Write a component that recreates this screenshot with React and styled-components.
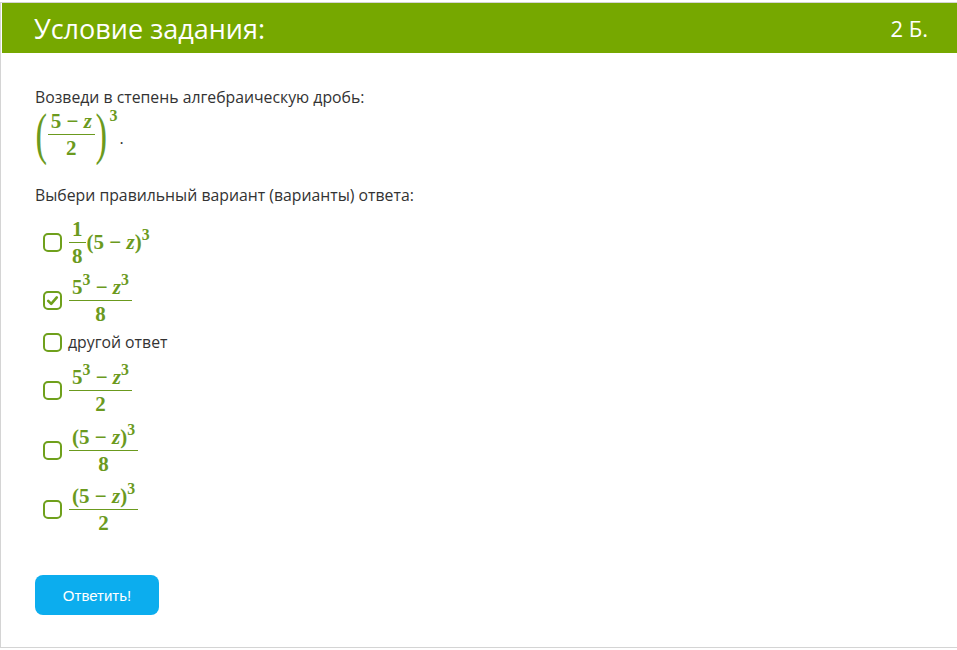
import React from "react";
import styled, { createGlobalStyle } from "styled-components";

const Global = createGlobalStyle`
  body {
    margin: 0;
    background: #fff;
    font-family: "Open Sans", "Liberation Sans", sans-serif;
  }
`

const Card = styled.div`
  margin-top: 2px;
  width: 957px;
  height: 646px;
  box-sizing: border-box;
  border: 1px solid #d4d4d4;
  border-right: none;
  padding-left: 1px;
`

const Header = styled.div`
  height: 50px;
  background: #76a800;
  color: #fff;
  display: flex;
  align-items: center;
  justify-content: space-between;
  padding: 0 29px 0 32px;
`

const Title = styled.h1`
  margin: 0;
  font-size: 27px;
  font-weight: 400;
`

const Points = styled.span`
  font-size: 22px;
`

const Body = styled.div`
  padding: 33px 33px 0 33px;
  color: #333;
  font-size: 15.8px;
`

const Line = styled.p`
  margin: ${p => p.mt || 0}px 0 0;
  line-height: 22px;
`

const Math = styled.span`
  font-family: "Liberation Serif", "DejaVu Serif", serif;
  font-weight: 700;
  color: #6b9a1e;
  font-size: 21px;
  display: inline-flex;
  align-items: center;
  white-space: nowrap;
`

const Frac = styled.span`
  display: inline-flex;
  flex-direction: column;
  align-items: center;
  margin: 0 1px;
`

const Num = styled.span`
  padding: 0 3px 2px;
  line-height: 22px;
  border-bottom: 1px solid #6b9a1e;
`

const Den = styled.span`
  padding-top: 2px;
  line-height: 22px;
`

const Var = styled.i`
  font-style: italic;
  font-weight: 700;
`

const Sup = styled.sup`
  font-size: 0.75em;
  vertical-align: ${p => p.up || 0.6}em;
  line-height: 0;
`

const Tail = styled.span`
  line-height: 22px;
`

const BigExpr = styled(Math)`
  display: flex;
  height: 52px;
  margin-left: 1px;
`

const BigParen = styled.span`
  font-weight: 400;
  font-size: 56px;
  line-height: 52px;
  transform: scaleX(0.62);
  margin: 0 -4px;
`

const OuterSup = styled.span`
  align-self: flex-start;
  font-size: 16px;
  line-height: 16px;
  margin: 0 0 0 3px;
`

const Dot = styled.span`
  align-self: center;
  color: #333;
  font-family: "Open Sans", sans-serif;
  font-weight: 400;
  font-size: 16px;
  margin: 8px 0 0 2px;
`

const Options = styled.div`
  margin-top: 7px;
  padding-left: 8px;
  display: flex;
  flex-direction: column;
`

const Option = styled.label`
  display: flex;
  align-items: center;
  gap: 6px;
  height: ${p => p.h}px;
`

const Box = styled.span`
  width: 19px;
  height: 19px;
  box-sizing: border-box;
  border: 2px solid #6fa01c;
  border-radius: 5px;
  display: flex;
  align-items: center;
  justify-content: center;
  flex-shrink: 0;
`

const Plain = styled.span`
  color: #333;
  font-size: 15.8px;
`

const Button = styled.button`
  margin-top: 32px;
  width: 124px;
  height: 40px;
  border: none;
  border-radius: 8px;
  background: #0cadee;
  color: #fff;
  font-family: "Liberation Sans", Arial, sans-serif;
  font-size: 15px;
`

function Check({ on }) {
  return (
    <Box>
      {on && (
        <svg width="13" height="13" viewBox="0 0 13 13">
          <path d="M2.2 6.8 L5.2 9.8 L10.8 3.4" fill="none" stroke="#6fa01c" strokeWidth="2.6" strokeLinecap="round" strokeLinejoin="round" />
        </svg>
      )}
    </Box>
  )
}

const minus = "\u2212"

const powDiff = <>5<Sup>3</Sup> {minus} <Var>z</Var><Sup>3</Sup></>
const powBin = <>(5 {minus} <Var>z</Var>)<Sup>3</Sup></>

export default function App() {
  const options = [
    {
      h: 58,
      body: (
        <Math>
          <Frac><Num>1</Num><Den>8</Den></Frac>
          <Tail>{powBin}</Tail>
        </Math>
      )
    },
    {
      h: 58,
      on: true,
      body: <Math><Frac><Num>{powDiff}</Num><Den>8</Den></Frac></Math>
    },
    { h: 26, body: <Plain>другой ответ</Plain> },
    {
      h: 70,
      body: <Math><Frac><Num>{powDiff}</Num><Den>2</Den></Frac></Math>
    },
    {
      h: 50,
      body: <Math><Frac><Num>{powBin}</Num><Den>8</Den></Frac></Math>
    },
    {
      h: 68,
      body: <Math><Frac><Num>{powBin}</Num><Den>2</Den></Frac></Math>
    }
  ]

  return (
    <>
      <Global />
      <Card>
        <Header>
          <Title>Условие задания:</Title>
          <Points>2 Б.</Points>
        </Header>
        <Body>
          <Line>Возведи в степень алгебраическую дробь:</Line>
          <BigExpr>
            <BigParen>(</BigParen>
            <Frac><Num>5 {minus} <Var>z</Var></Num><Den>2</Den></Frac>
            <BigParen>)</BigParen>
            <OuterSup>3</OuterSup>
            <Dot>.</Dot>
          </BigExpr>
          <Line mt={24}>Выбери правильный вариант (варианты) ответа:</Line>
          <Options>
            {options.map((o, i) => (
              <Option key={i} h={o.h}>
                <Check on={o.on} />
                {o.body}
              </Option>
            ))}
          </Options>
          <Button>Ответить!</Button>
        </Body>
      </Card>
    </>
  )
}
